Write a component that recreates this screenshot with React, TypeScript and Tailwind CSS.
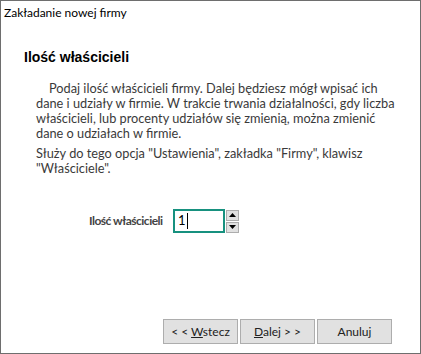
import React from "react";

const body = { fontFamily: '"Lato", "Liberation Sans", sans-serif' };

function SpinArrow({ up }: { up?: boolean }) {
  return (
    <svg width="7" height="4" viewBox="0 0 7 4">
      {up ? <polygon points="3.5,0 7,4 0,4" fill="#000" /> : <polygon points="0,0 7,0 3.5,4" fill="#000" />}
    </svg>
  );
}

export default function App() {
  return (
    <div
      className="w-[421px] h-[354px] border border-[#6e6e6e] bg-white flex flex-col text-[12px]"
      style={body}
    >
      <div className="pl-[3px] pt-[4px] leading-[16px] text-black">Zakładanie nowej firmy</div>

      <h1
        className="pl-[23px] mt-[28px] text-[14px] leading-[16px] font-bold text-black"
        style={{ fontFamily: '"Liberation Sans", Arial, sans-serif' }}
      >
        Ilość właścicieli
      </h1>

      <div className="pl-[35px] mt-[16px] text-[#3a3a3a] text-[12.75px] leading-[15px]">
        <p>
          <span className="pl-[13px]">Podaj ilość właścicieli firmy. Dalej będziesz mógł wpisać ich</span>
          <br />
          dane i udziały w firmie. W trakcie trwania działalności, gdy liczba
          <br />
          właścicieli, lub procenty udziałów się zmienią, można zmienić
          <br />
          dane o udziałach w firmie.
        </p>
        <p className="mt-[5px]">
          Służy do tego opcja "Ustawienia", zakładka "Firmy", klawisz
          <br />
          "Właściciele".
        </p>
      </div>

      <div className="flex items-center mt-[33px] pl-[88px]">
        <span className="w-[74px] whitespace-nowrap font-bold text-[#444] tracking-[-0.5px] mr-[10px]">
          Ilość właścicieli
        </span>
        <div className="w-[52px] h-[24px] border-2 border-[#17917f] flex items-center pl-[3px] text-[13px] text-black">
          <span>1</span>
          <span className="w-px h-[16px] bg-black ml-[1px]" />
        </div>
        <div className="flex flex-col gap-px ml-px">
          <div className="w-[13px] h-[11px] bg-[#e1e1e1] border border-[#adadad] flex items-center justify-center">
            <SpinArrow up />
          </div>
          <div className="w-[13px] h-[11px] bg-[#e1e1e1] border border-[#adadad] flex items-center justify-center">
            <SpinArrow />
          </div>
        </div>
      </div>

      <div className="mt-auto flex justify-end gap-[2px] pr-[28px] pb-[9px] text-[#222]">
        <button className="w-[75px] h-[25px] bg-[#e1e1e1] border border-[#adadad]">
          &lt; &lt; <span className="underline">W</span>stecz
        </button>
        <button className="w-[75px] h-[25px] bg-[#e1e1e1] border border-[#adadad]">
          <span className="underline">D</span>alej &gt; &gt;
        </button>
        <button className="w-[75px] h-[25px] bg-[#e1e1e1] border border-[#adadad]">Anuluj</button>
      </div>
    </div>
  );
}
